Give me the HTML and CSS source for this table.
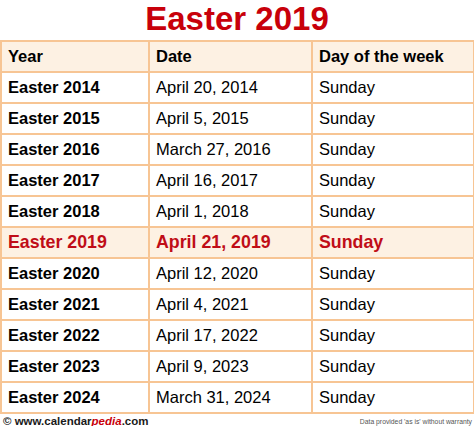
FILE: index.html
```html
<!DOCTYPE html>
<html>
<head>
<meta charset="utf-8">
<link rel="stylesheet" href="styles.css">
</head>
<body>
<h1 class="title">Easter 2019</h1>
<table class="dates">
  <colgroup><col class="c1"><col class="c2"><col class="c3"></colgroup>
  <thead>
    <tr class="head"><th>Year</th><th>Date</th><th>Day of the week</th></tr>
  </thead>
  <tbody>
    <tr><td class="yr">Easter 2014</td><td>April 20, 2014</td><td>Sunday</td></tr>
    <tr><td class="yr">Easter 2015</td><td>April 5, 2015</td><td>Sunday</td></tr>
    <tr><td class="yr">Easter 2016</td><td>March 27, 2016</td><td>Sunday</td></tr>
    <tr><td class="yr">Easter 2017</td><td>April 16, 2017</td><td>Sunday</td></tr>
    <tr><td class="yr">Easter 2018</td><td>April 1, 2018</td><td>Sunday</td></tr>
    <tr class="current"><td class="yr">Easter 2019</td><td>April 21, 2019</td><td>Sunday</td></tr>
    <tr><td class="yr">Easter 2020</td><td>April 12, 2020</td><td>Sunday</td></tr>
    <tr><td class="yr">Easter 2021</td><td>April 4, 2021</td><td>Sunday</td></tr>
    <tr><td class="yr">Easter 2022</td><td>April 17, 2022</td><td>Sunday</td></tr>
    <tr><td class="yr">Easter 2023</td><td>April 9, 2023</td><td>Sunday</td></tr>
    <tr><td class="yr">Easter 2024</td><td>March 31, 2024</td><td>Sunday</td></tr>
  </tbody>
</table>
<div class="footer">
  <span class="site">© www.calendar<span class="pedia">pedia</span>.com</span>
  <span class="note">Data provided 'as is' without warranty</span>
</div>
</body>
</html>
```
FILE: styles.css
```css
html, body {
  margin: 0;
  padding: 0;
  background: #ffffff;
  font-family: "Liberation Sans", Arial, sans-serif;
  color: #000000;
}
body {
  width: 474px;
  height: 426px;
  overflow: hidden;
}
.title {
  margin: 0;
  height: 40px;
  line-height: 37px;
  font-size: 33px;
  font-weight: bold;
  color: #c8000a;
  text-align: center;
}
.dates {
  border-collapse: collapse;
  table-layout: fixed;
  width: 473px;
  margin-left: 0;
}
.c1 { width: 148px; }
.c2 { width: 163px; }
.c3 { width: 162px; }
.dates th, .dates td {
  border: 2px solid #f7c594;
  height: 29px;
  padding: 0 0 0 6px;
  font-size: 16.5px;
  text-align: left;
  white-space: nowrap;
  vertical-align: middle;
}
.dates th {
  font-weight: bold;
}
.head {
  background: #fdf1e3;
}
.yr {
  font-weight: bold;
}
.current {
  background: #fdf1e3;
}
.dates .current td {
  color: #c00d17;
  font-weight: bold;
  font-size: 17.8px;
}
.footer {
  display: flex;
  justify-content: space-between;
  align-items: center;
  height: 12px;
  padding: 1px 2px 0 3px;
}
.site {
  font-size: 11.5px;
  font-weight: bold;
  color: #1a1a1a;
}
.pedia {
  color: #c8000a;
  font-style: italic;
}
.note {
  font-size: 6.8px;
  color: #555555;
}
```
